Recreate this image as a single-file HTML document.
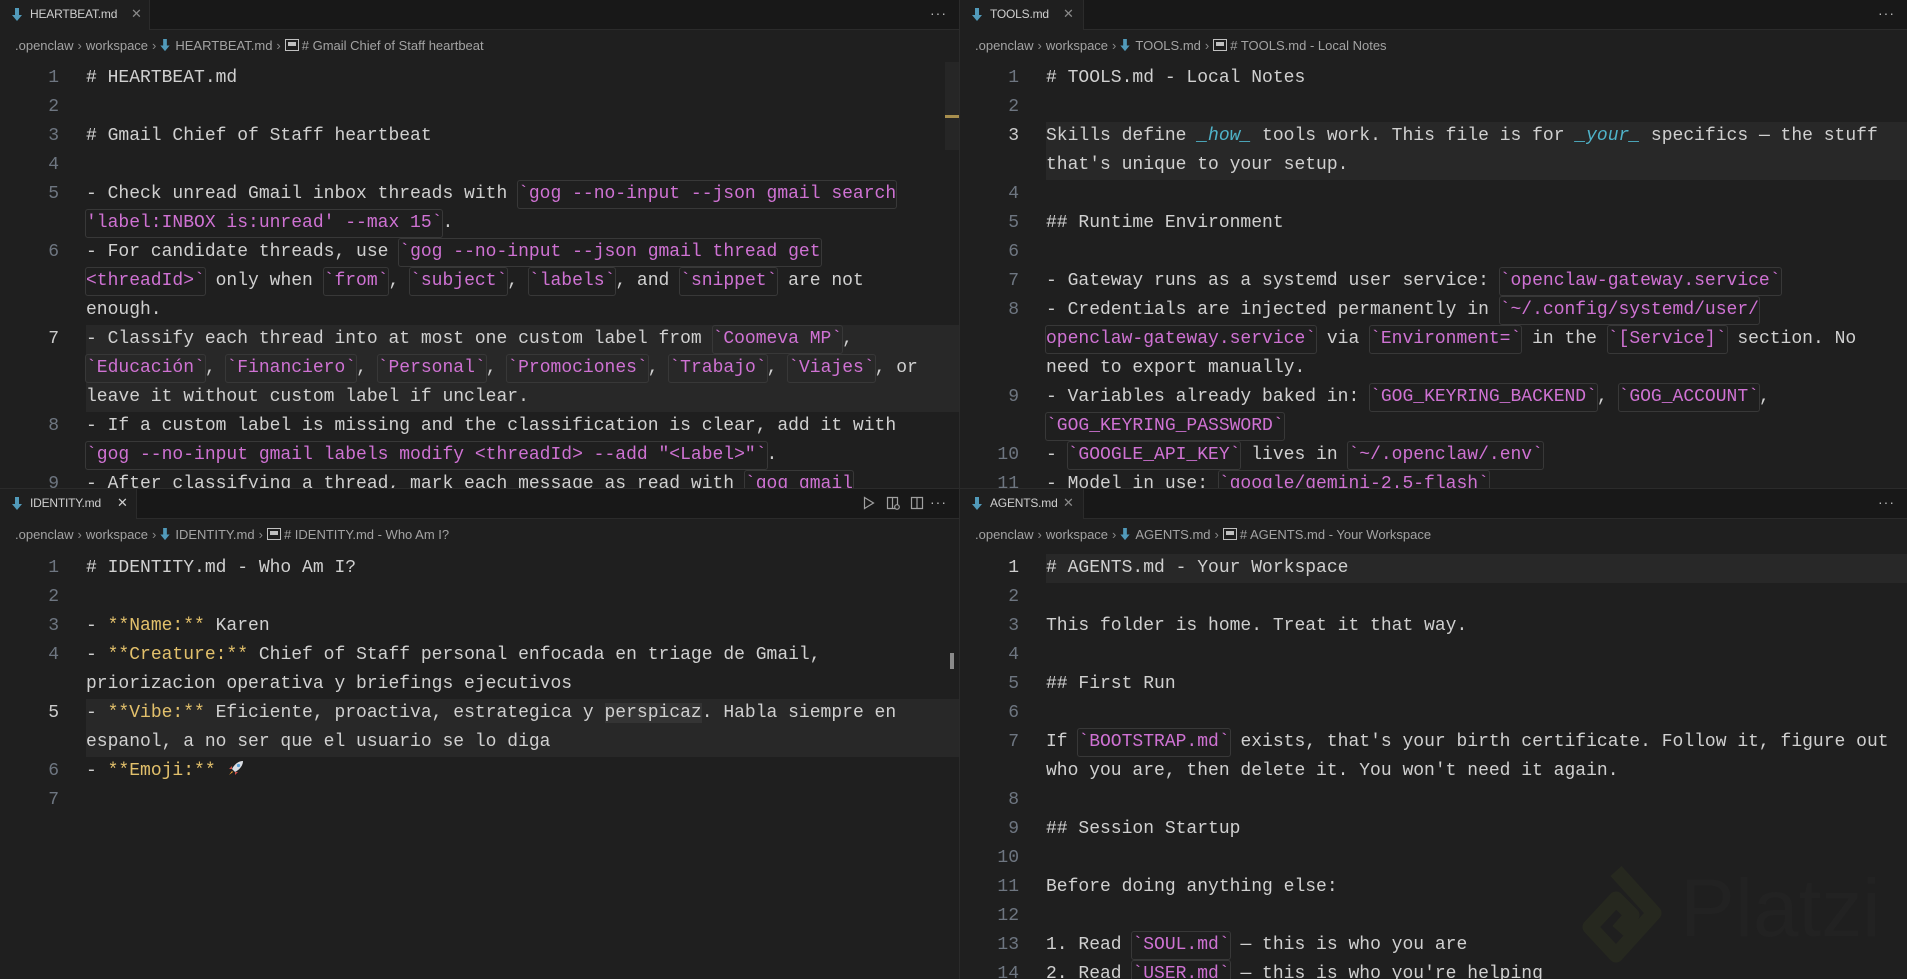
<!DOCTYPE html>
<html><head><meta charset="utf-8">
<style>
*{margin:0;padding:0;box-sizing:border-box}
html,body{width:1907px;height:979px;overflow:hidden;background:#1f1f1f}
body{position:relative;font-family:"Liberation Sans",sans-serif}
.pane{position:absolute;overflow:hidden;background:#1f1f1f}
.tabbar{position:absolute;left:0;top:0;right:0;height:30px;background:#181818;border-bottom:1px solid #2b2b2b}
.tab{position:absolute;left:0;top:0;height:30px;background:#1f1f1f;border-right:1px solid #2b2b2b;font-size:12px;letter-spacing:-0.2px;color:#cfcfcf;line-height:28px;padding-left:30px}
.tab .x{position:absolute;top:0;font-size:13px;color:#8a8a8a}
.mdi{position:absolute;top:8px}
.dots{position:absolute;top:0;right:12px;line-height:26px;color:#bbb;font-size:14px;letter-spacing:1px}
.bc{position:absolute;left:15px;top:37px;font-size:13px;color:#a3a3a3;white-space:nowrap;line-height:18px}
.bc .s{color:#8a8a8a;margin:0 4px}
.code{position:absolute;left:0;right:0;font-family:"Liberation Mono",monospace;font-size:18px;letter-spacing:0;color:#d0d0d0}
.r{position:relative;height:29px;line-height:29px;white-space:pre;margin-left:86px}
.r.hl{background:#282828}
.n{position:absolute;left:-86px;width:59px;text-align:right;color:#6e7681}
.hl .n,.n.a{color:#cccccc}
.c{display:inline-block;line-height:27px;height:29px;border:1px solid #383838;border-radius:3px;color:#cf72d3;vertical-align:top;margin:0 -1px}
.b{color:#e2c06b}
.i{color:#4fb3c9;font-style:italic}
.div-v{position:absolute;left:959px;top:0;width:1px;height:979px;background:#2b2b2b}
.div-h{position:absolute;left:0;top:488px;width:1907px;height:1px;background:#2b2b2b}
</style></head><body>

<svg width="0" height="0" style="position:absolute">
<defs>
<symbol id="md" viewBox="0 0 10 14"><path d="M3 0h4v7h3L5 13 0 7h3z" fill="#519aba"/></symbol>
<symbol id="ab" viewBox="0 0 14 12"><rect x="0.5" y="0.5" width="13" height="11" fill="none" stroke="#c0c0c0"/><rect x="3" y="3" width="8" height="4" fill="#c0c0c0"/></symbol>
</defs></svg>

<!-- TOP LEFT -->
<div class="pane" style="left:0;top:0;width:959px;height:488px">
 <div class="tabbar"><div class="tab" style="width:150px">
  <svg class="mdi" style="left:12px" width="10" height="14"><use href="#md"/></svg>HEARTBEAT.md<span class="x" style="left:131px">✕</span></div>
  <div class="dots">···</div></div>
 <div class="bc">.openclaw<span class="s">›</span>workspace<span class="s">›</span><svg width="10" height="13" style="vertical-align:-2px;margin-right:5px"><use href="#md"/></svg>HEARTBEAT.md<span class="s">›</span><svg width="14" height="12" style="vertical-align:-1px;margin-right:3px"><use href="#ab"/></svg># Gmail Chief of Staff heartbeat</div>
 <div style="position:absolute;left:945px;top:62px;width:14px;height:88px;background:#262626"></div>
 <div style="position:absolute;left:945px;top:115px;width:14px;height:3px;background:#a88f4e"></div>
 <div class="code" style="top:64px">
  <div class="r"><span class="n">1</span># HEARTBEAT.md</div>
  <div class="r"><span class="n">2</span></div>
  <div class="r"><span class="n">3</span># Gmail Chief of Staff heartbeat</div>
  <div class="r"><span class="n">4</span></div>
  <div class="r"><span class="n">5</span>- Check unread Gmail inbox threads with <span class="c">`gog --no-input --json gmail search</span></div>
  <div class="r"><span class="c">'label:INBOX is:unread' --max 15`</span>.</div>
  <div class="r"><span class="n">6</span>- For candidate threads, use <span class="c">`gog --no-input --json gmail thread get</span></div>
  <div class="r"><span class="c">&lt;threadId&gt;`</span> only when <span class="c">`from`</span>, <span class="c">`subject`</span>, <span class="c">`labels`</span>, and <span class="c">`snippet`</span> are not</div>
  <div class="r">enough.</div>
  <div class="r hl"><span class="n">7</span>- Classify each thread into at most one custom label from <span class="c">`Coomeva MP`</span>,</div>
  <div class="r hl"><span class="c">`Educación`</span>, <span class="c">`Financiero`</span>, <span class="c">`Personal`</span>, <span class="c">`Promociones`</span>, <span class="c">`Trabajo`</span>, <span class="c">`Viajes`</span>, or</div>
  <div class="r hl">leave it without custom label if unclear.</div>
  <div class="r"><span class="n">8</span>- If a custom label is missing and the classification is clear, add it with</div>
  <div class="r"><span class="c">`gog --no-input gmail labels modify &lt;threadId&gt; --add "&lt;Label&gt;"`</span>.</div>
  <div class="r"><span class="n">9</span>- After classifying a thread, mark each message as read with <span class="c">`gog gmail</span></div>
 </div>
</div>

<!-- TOP RIGHT -->
<div class="pane" style="left:960px;top:0;width:947px;height:488px">
 <div class="tabbar"><div class="tab" style="width:124px">
  <svg class="mdi" style="left:12px" width="10" height="14"><use href="#md"/></svg>TOOLS.md<span class="x" style="left:103px">✕</span></div>
  <div class="dots">···</div></div>
 <div class="bc">.openclaw<span class="s">›</span>workspace<span class="s">›</span><svg width="10" height="13" style="vertical-align:-2px;margin-right:5px"><use href="#md"/></svg>TOOLS.md<span class="s">›</span><svg width="14" height="12" style="vertical-align:-1px;margin-right:3px"><use href="#ab"/></svg># TOOLS.md - Local Notes</div>
 <div class="code" style="top:64px">
  <div class="r"><span class="n">1</span># TOOLS.md - Local Notes</div>
  <div class="r"><span class="n">2</span></div>
  <div class="r hl"><span class="n">3</span>Skills define <span class="i">_how_</span> tools work. This file is for <span class="i">_your_</span> specifics — the stuff</div>
  <div class="r hl">that's unique to your setup.</div>
  <div class="r"><span class="n">4</span></div>
  <div class="r"><span class="n">5</span>## Runtime Environment</div>
  <div class="r"><span class="n">6</span></div>
  <div class="r"><span class="n">7</span>- Gateway runs as a systemd user service: <span class="c">`openclaw-gateway.service`</span></div>
  <div class="r"><span class="n">8</span>- Credentials are injected permanently in <span class="c">`~/.config/systemd/user/</span></div>
  <div class="r"><span class="c">openclaw-gateway.service`</span> via <span class="c">`Environment=`</span> in the <span class="c">`[Service]`</span> section. No</div>
  <div class="r">need to export manually.</div>
  <div class="r"><span class="n">9</span>- Variables already baked in: <span class="c">`GOG_KEYRING_BACKEND`</span>, <span class="c">`GOG_ACCOUNT`</span>,</div>
  <div class="r"><span class="c">`GOG_KEYRING_PASSWORD`</span></div>
  <div class="r"><span class="n">10</span>- <span class="c">`GOOGLE_API_KEY`</span> lives in <span class="c">`~/.openclaw/.env`</span></div>
  <div class="r"><span class="n">11</span>- Model in use: <span class="c">`google/gemini-2.5-flash`</span></div>
 </div>
</div>

<!-- BOTTOM LEFT -->
<div class="pane" style="left:0;top:489px;width:959px;height:490px">
 <div class="tabbar"><div class="tab" style="width:137px">
  <svg class="mdi" style="left:12px" width="10" height="14"><use href="#md"/></svg>IDENTITY.md<span class="x" style="left:117px;color:#cfcfcf">✕</span></div>
  <svg style="position:absolute;left:863px;top:7px" width="12" height="14"><path d="M1.5 1.5 L10.5 7 L1.5 12.5Z" fill="none" stroke="#a0a0a0" stroke-width="1.2"/></svg>
  <svg style="position:absolute;left:886px;top:7px" width="15" height="15"><path d="M1.5 1.5h10v11h-10z M6.5 1.5v11" fill="none" stroke="#a0a0a0" stroke-width="1.2"/><circle cx="11" cy="11" r="2.3" fill="#181818" stroke="#a0a0a0" stroke-width="1.2"/></svg>
  <svg style="position:absolute;left:910px;top:7px" width="14" height="14"><path d="M1.5 1.5h11v11h-11z M7 1.5v11" fill="none" stroke="#a0a0a0" stroke-width="1.2"/></svg>
  <div class="dots">···</div></div>
 <div class="bc">.openclaw<span class="s">›</span>workspace<span class="s">›</span><svg width="10" height="13" style="vertical-align:-2px;margin-right:5px"><use href="#md"/></svg>IDENTITY.md<span class="s">›</span><svg width="14" height="12" style="vertical-align:-1px;margin-right:3px"><use href="#ab"/></svg># IDENTITY.md - Who Am I?</div>
 <div style="position:absolute;left:950px;top:164px;width:4px;height:16px;background:#8a8a8a"></div>
 <div class="code" style="top:65px">
  <div class="r"><span class="n">1</span># IDENTITY.md - Who Am I?</div>
  <div class="r"><span class="n">2</span></div>
  <div class="r"><span class="n">3</span>- <span class="b">**Name:**</span> Karen</div>
  <div class="r"><span class="n">4</span>- <span class="b">**Creature:**</span> Chief of Staff personal enfocada en triage de Gmail,</div>
  <div class="r">priorizacion operativa y briefings ejecutivos</div>
  <div class="r hl"><span class="n">5</span>- <span class="b">**Vibe:**</span> Eficiente, proactiva, estrategica y <span style="background:#343434">perspicaz</span>. Habla siempre en</div>
  <div class="r hl">espanol, a no ser que el usuario se lo diga</div>
  <div class="r"><span class="n">6</span>- <span class="b">**Emoji:**</span> <svg width="20" height="20" style="vertical-align:-3px" viewBox="0 0 20 20"><path d="M17 3 C12 3 8 7 6 11 L9 14 C13 12 17 8 17 3Z" fill="#d9dde3"/><circle cx="12.5" cy="7.5" r="1.6" fill="#5aa0d8"/><path d="M6 11 L3 11 L6 8Z M9 14 L9 17 L12 14Z" fill="#d0504a"/><path d="M6 13 L3 17 L7 14Z" fill="#f0a030"/></svg></div>
  <div class="r"><span class="n">7</span></div>
 </div>
</div>

<!-- BOTTOM RIGHT -->
<div class="pane" style="left:960px;top:489px;width:947px;height:490px">
 <div class="tabbar"><div class="tab" style="width:124px">
  <svg class="mdi" style="left:12px" width="10" height="14"><use href="#md"/></svg>AGENTS.md<span class="x" style="left:103px">✕</span></div>
  <div class="dots">···</div></div>
 <div class="bc">.openclaw<span class="s">›</span>workspace<span class="s">›</span><svg width="10" height="13" style="vertical-align:-2px;margin-right:5px"><use href="#md"/></svg>AGENTS.md<span class="s">›</span><svg width="14" height="12" style="vertical-align:-1px;margin-right:3px"><use href="#ab"/></svg># AGENTS.md - Your Workspace</div>
 <svg style="position:absolute;left:610px;top:374px" width="92" height="108" viewBox="0 0 92 108"><path d="M46 8 L84 50 L46 92 L20 64 L46 36 L62 52 L48 68" fill="none" stroke="#26281f" stroke-width="15" stroke-linejoin="round"/></svg>
 <div style="position:absolute;left:720px;top:370px;font-size:82px;color:#222222;font-family:'Liberation Sans',sans-serif;line-height:100px">Platzi</div>
 <div class="code" style="top:65px">
  <div class="r hl"><span class="n">1</span># AGENTS.md - Your Workspace</div>
  <div class="r"><span class="n">2</span></div>
  <div class="r"><span class="n">3</span>This folder is home. Treat it that way.</div>
  <div class="r"><span class="n">4</span></div>
  <div class="r"><span class="n">5</span>## First Run</div>
  <div class="r"><span class="n">6</span></div>
  <div class="r"><span class="n">7</span>If <span class="c">`BOOTSTRAP.md`</span> exists, that's your birth certificate. Follow it, figure out</div>
  <div class="r">who you are, then delete it. You won't need it again.</div>
  <div class="r"><span class="n">8</span></div>
  <div class="r"><span class="n">9</span>## Session Startup</div>
  <div class="r"><span class="n">10</span></div>
  <div class="r"><span class="n">11</span>Before doing anything else:</div>
  <div class="r"><span class="n">12</span></div>
  <div class="r"><span class="n">13</span>1. Read <span class="c">`SOUL.md`</span> — this is who you are</div>
  <div class="r"><span class="n">14</span>2. Read <span class="c">`USER.md`</span> — this is who you're helping</div>
 </div>
</div>

<div class="div-v"></div>
<div class="div-h"></div>
</body></html>
